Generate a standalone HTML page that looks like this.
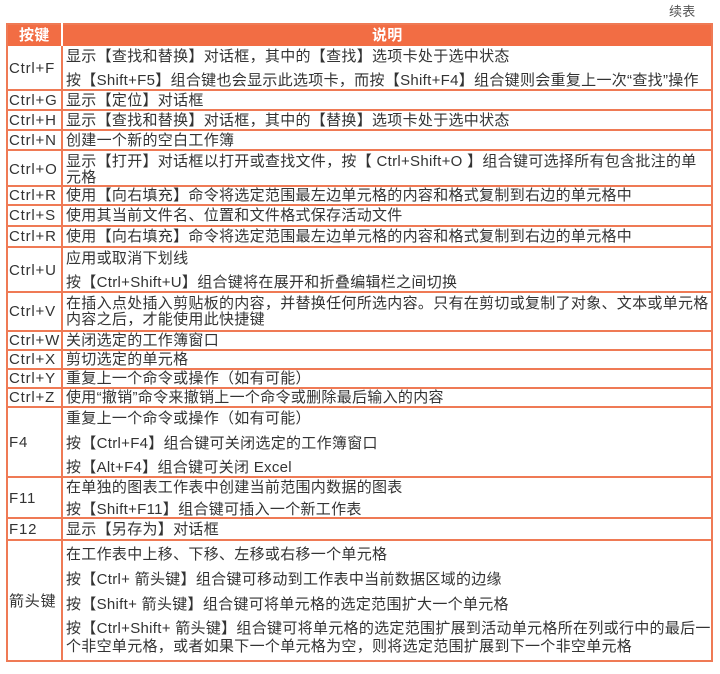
<!DOCTYPE html>
<html><head><meta charset="utf-8"><style>
body{margin:0;width:720px;height:674px;background:#fff;position:relative;overflow:hidden;font-family:"Liberation Sans","Noto Sans CJK SC",sans-serif;color:#333;}
.t{position:absolute;font-size:15px;line-height:18px;white-space:nowrap;letter-spacing:0.3px;margin-top:1px}
.k{left:9px;letter-spacing:0.8px}.d{left:66px}
.h{position:absolute;left:6px;width:706px;border-top:2px solid #ef7a55;}
#tb{position:absolute;left:6px;top:23px;width:703px;height:635px;border:2px solid #ef7a55;}
#hd{position:absolute;left:6px;top:23px;width:707px;height:23px;background:#f26d44;}
#vl{position:absolute;left:61px;top:23px;height:637px;border-left:2px solid #ef7a55;}
.w{color:#fff;font-weight:bold;font-size:15px;top:26px}
</style></head><body>
<div class="t" style="left:669px;top:2px;color:#555;font-size:13px">续表</div>
<div id="hd"></div>
<div id="tb"></div>
<div id="vl" style="border-color:#fff;height:23px"></div>
<div id="vl" style="top:46px;height:614px"></div>
<div class="t w" style="left:19px">按键</div>
<div class="t w" style="left:372px">说明</div>
<div class="h" style="top:89px"></div>
<div class="h" style="top:109px"></div>
<div class="h" style="top:129px"></div>
<div class="h" style="top:149px"></div>
<div class="h" style="top:185px"></div>
<div class="h" style="top:204px"></div>
<div class="h" style="top:225px"></div>
<div class="h" style="top:246px"></div>
<div class="h" style="top:291px"></div>
<div class="h" style="top:330px"></div>
<div class="h" style="top:349px"></div>
<div class="h" style="top:368px"></div>
<div class="h" style="top:387px"></div>
<div class="h" style="top:406px"></div>
<div class="h" style="top:476px"></div>
<div class="h" style="top:517px"></div>
<div class="h" style="top:539px"></div>

<div class="t k" style="top:59px">Ctrl+F</div>
<div class="t d" style="top:47px">显示【查找和替换】对话框，其中的【查找】选项卡处于选中状态</div>
<div class="t d" style="top:71px">按【Shift+F5】组合键也会显示此选项卡，而按【Shift+F4】组合键则会重复上一次“查找”操作</div>
<div class="t k" style="top:91px">Ctrl+G</div><div class="t d" style="top:91px">显示【定位】对话框</div>
<div class="t k" style="top:111px">Ctrl+H</div><div class="t d" style="top:111px">显示【查找和替换】对话框，其中的【替换】选项卡处于选中状态</div>
<div class="t k" style="top:131px">Ctrl+N</div><div class="t d" style="top:131px">创建一个新的空白工作簿</div>
<div class="t k" style="top:160px">Ctrl+O</div>
<div class="t d" style="top:152px">显示【打开】对话框以打开或查找文件，按【 Ctrl+Shift+O 】组合键可选择所有包含批注的单</div>
<div class="t d" style="top:168px">元格</div>
<div class="t k" style="top:186px">Ctrl+R</div><div class="t d" style="top:186px">使用【向右填充】命令将选定范围最左边单元格的内容和格式复制到右边的单元格中</div>
<div class="t k" style="top:206px">Ctrl+S</div><div class="t d" style="top:206px">使用其当前文件名、位置和文件格式保存活动文件</div>
<div class="t k" style="top:227px">Ctrl+R</div><div class="t d" style="top:227px">使用【向右填充】命令将选定范围最左边单元格的内容和格式复制到右边的单元格中</div>
<div class="t k" style="top:261px">Ctrl+U</div>
<div class="t d" style="top:249px">应用或取消下划线</div>
<div class="t d" style="top:273px">按【Ctrl+Shift+U】组合键将在展开和折叠编辑栏之间切换</div>
<div class="t k" style="top:302px">Ctrl+V</div>
<div class="t d" style="top:294px">在插入点处插入剪贴板的内容，并替换任何所选内容。只有在剪切或复制了对象、文本或单元格</div>
<div class="t d" style="top:310px">内容之后，才能使用此快捷键</div>
<div class="t k" style="top:331px">Ctrl+W</div><div class="t d" style="top:331px">关闭选定的工作簿窗口</div>
<div class="t k" style="top:350px">Ctrl+X</div><div class="t d" style="top:350px">剪切选定的单元格</div>
<div class="t k" style="top:369px">Ctrl+Y</div><div class="t d" style="top:369px">重复上一个命令或操作（如有可能）</div>
<div class="t k" style="top:388px">Ctrl+Z</div><div class="t d" style="top:388px">使用“撤销”命令来撤销上一个命令或删除最后输入的内容</div>
<div class="t k" style="top:433px">F4</div>
<div class="t d" style="top:409px">重复上一个命令或操作（如有可能）</div>
<div class="t d" style="top:434px">按【Ctrl+F4】组合键可关闭选定的工作簿窗口</div>
<div class="t d" style="top:458px">按【Alt+F4】组合键可关闭 Excel</div>
<div class="t k" style="top:489px">F11</div>
<div class="t d" style="top:478px">在单独的图表工作表中创建当前范围内数据的图表</div>
<div class="t d" style="top:500px">按【Shift+F11】组合键可插入一个新工作表</div>
<div class="t k" style="top:520px">F12</div><div class="t d" style="top:520px">显示【另存为】对话框</div>
<div class="t k" style="top:592px">箭头键</div>
<div class="t d" style="top:545px">在工作表中上移、下移、左移或右移一个单元格</div>
<div class="t d" style="top:570px">按【Ctrl+ 箭头键】组合键可移动到工作表中当前数据区域的边缘</div>
<div class="t d" style="top:595px">按【Shift+ 箭头键】组合键可将单元格的选定范围扩大一个单元格</div>
<div class="t d" style="top:619px">按【Ctrl+Shift+ 箭头键】组合键可将单元格的选定范围扩展到活动单元格所在列或行中的最后一</div>
<div class="t d" style="top:637px">个非空单元格，或者如果下一个单元格为空，则将选定范围扩展到下一个非空单元格</div>
</body></html>
